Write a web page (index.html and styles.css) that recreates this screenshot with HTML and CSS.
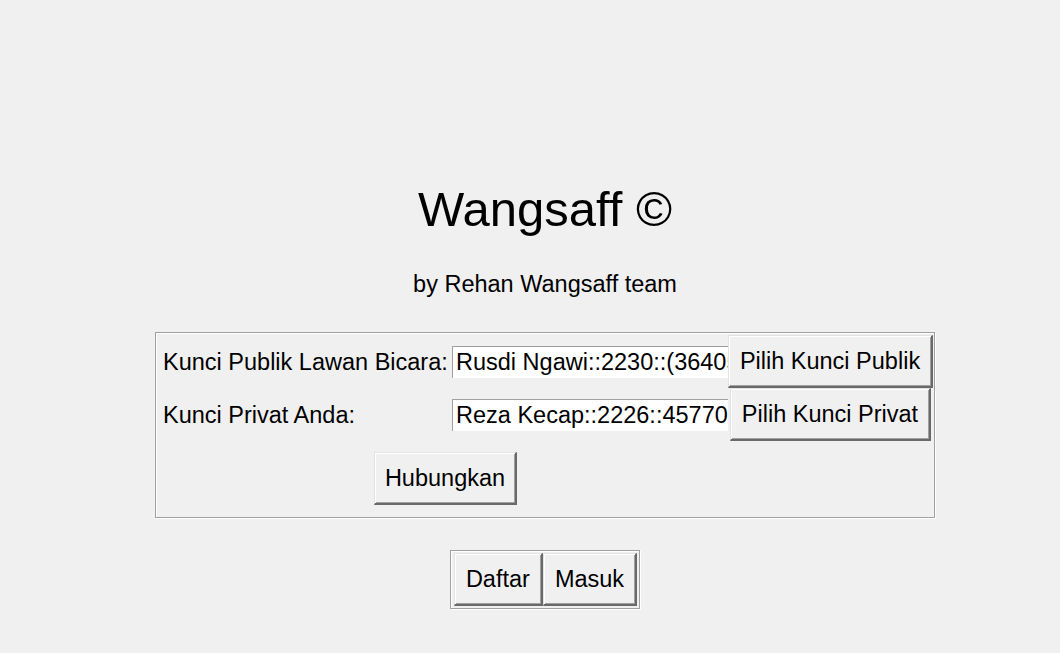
FILE: index.html
```html
<!DOCTYPE html>
<html lang="id">
<head>
<meta charset="utf-8">
<title>Wangsaff</title>
<link rel="stylesheet" href="styles.css">
</head>
<body>
<div class="app">
  <h1 class="title">Wangsaff ©</h1>
  <p class="subtitle">by Rehan Wangsaff team</p>
  <div class="keyframe">
    <span class="label">Kunci Publik Lawan Bicara:</span>
    <input class="entry" type="text" value="Rusdi Ngawi::2230::(36405, 11873)" readonly>
    <button class="btn btn-side">Pilih Kunci Publik</button>
    <span class="label">Kunci Privat Anda:</span>
    <input class="entry" type="text" value="Reza Kecap::2226::45770012" readonly>
    <button class="btn btn-side">Pilih Kunci Privat</button>
    <button class="btn btn-connect">Hubungkan</button>
  </div>
  <div class="authbox">
    <button class="btn">Daftar</button>
    <button class="btn">Masuk</button>
  </div>
</div>
</body>
</html>
```
FILE: styles.css
```css
html, body {
  margin: 0;
  height: 100%;
}
body {
  background: #f0f0f0;
  color: #000;
  font-family: "Liberation Sans", Arial, sans-serif;
  overflow: hidden;
}
.app {
  display: flex;
  flex-direction: column;
  align-items: center;
  padding-top: 185px;
  padding-left: 30px;
}
.title {
  margin: 0;
  font-size: 49px;
  line-height: 48px;
  font-weight: normal;
}
.subtitle {
  margin: 40px 0 0;
  font-size: 23.5px;
  line-height: 23px;
}
.keyframe {
  margin-top: 36px;
  width: 780px;
  height: 186px;
  box-sizing: border-box;
  border: 1px solid #a0a0a0;
  box-shadow: 1px 1px 0 #fff, inset 1px 1px 0 #fff;
  padding: 2px 1px 0 7px;
  display: grid;
  grid-template-columns: 289px 276px 205px;
  grid-template-rows: 53px 53px auto;
  align-content: start;
}
.label {
  align-self: center;
  font-size: 23.5px;
  line-height: 26px;
  white-space: nowrap;
}
.entry {
  align-self: center;
  height: 32px;
  box-sizing: border-box;
  margin: 0;
  padding: 0 0 0 3px;
  border: 0;
  border-top: 1px solid #a0a0a0;
  border-left: 1px solid #a0a0a0;
  background: #fff;
  font-family: inherit;
  font-size: 23.5px;
  color: #000;
  outline: none;
  width: 276px;
}
.btn {
  height: 53px;
  box-sizing: border-box;
  margin: 0;
  padding: 0 11px;
  background: #f0f0f0;
  border-style: solid;
  border-width: 1px 2px 2px 1px;
  border-color: #e3e3e3 #696969 #696969 #e3e3e3;
  box-shadow: inset 1px 1px 0 #fff, inset -1px -1px 0 #a0a0a0;
  font-family: inherit;
  font-size: 23.5px;
  color: #000;
  white-space: nowrap;
}
.btn-side {
  justify-self: center;
  padding: 0 11px;
}
.btn-connect {
  grid-column: 1 / 3;
  justify-self: center;
  margin-top: 11px;
  padding: 0 10px;
}
.authbox {
  margin-top: 32px;
  display: flex;
  border: 1px solid #a0a0a0;
  box-shadow: 1px 1px 0 #fff, inset 1px 1px 0 #fff;
  padding: 2px 2px 2px 3px;
}
```
